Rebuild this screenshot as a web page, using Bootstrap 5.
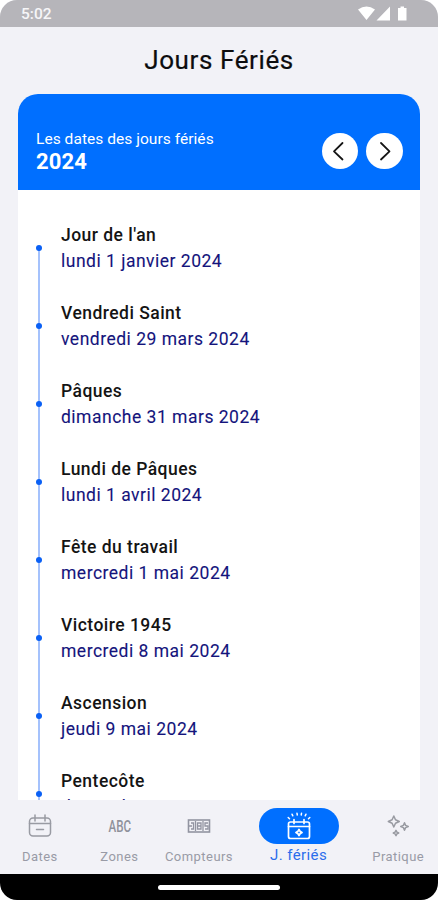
<!DOCTYPE html>
<html lang="fr">
<head>
<meta charset="utf-8">
<meta name="viewport" content="width=device-width, initial-scale=1">
<title>Jours Fériés</title>
<link href="https://cdn.jsdelivr.net/npm/bootstrap@5.3.0/dist/css/bootstrap.min.css" rel="stylesheet">
<style>
body{font-family:Roboto,"Liberation Sans",sans-serif;background:#fff}
.phone{width:438px;height:900px;background:#f2f2f7;border-radius:17px 17px 0 0}
.status{height:27px;background:#b6b5ba;color:#f6f6f8;font-size:15.5px;font-weight:500;line-height:27px;padding:1px 30px 0 21px}
.page-title{height:67px;font-size:26px;line-height:67px;letter-spacing:.6px;color:#0c0c0e;font-weight:400;-webkit-text-stroke:.2px #0c0c0e}
.holidays{margin:0 18px;border-radius:20px 20px 0 0;height:706px}
.holidays-head{height:96px;background:#006fff;padding:19px 17.500px 1px 18px}
.head-sub{font-size:15.5px;line-height:21px;letter-spacing:.05px}
.head-year{font-size:22px;line-height:24px;letter-spacing:.1px}
.round-btn{width:36.500px;height:36.500px;padding:0}
.timeline{padding:19px 0 0 43px;margin:0}
.timeline li{position:relative;height:78px;padding-top:13px;line-height:26px;font-size:17.5px;white-space:nowrap}
.timeline li::before{content:"";position:absolute;left:-22.6px;top:39px;width:2px;height:78px;background:#a5c2fc}
.timeline li::after{content:"";position:absolute;left:-24.6px;top:36px;width:6px;height:6px;border-radius:50%;background:#0a60f5}
.day-name{color:#141414;font-weight:500;letter-spacing:.47px}
.day-date{color:#14147c;letter-spacing:.5px;-webkit-text-stroke:.1px #14147c}
.tabs{height:74px;background:#f2f2f7}
.tab{width:79.6px;color:#999ba6;font-size:13px;letter-spacing:.45px;line-height:16px}
.tab .pic{height:36px;width:80px}
.tabs .active{width:120px;color:#2b6dec;font-size:15px;letter-spacing:.4px}
.tabs .active .pic{background:#006fff;border-radius:18px}
.tab .label{margin-top:5px}
.tabs .active .label{margin-top:3px}
.system{height:26px;background:#000;border-radius:0 0 17px 17px}
.handle{width:122px;height:5px;border-radius:3px;background:#fff}
.bottom{background:#fff}
</style>
<script src="https://cdn.jsdelivr.net/npm/bootstrap@5.3.0/dist/js/bootstrap.bundle.min.js"></script>
</head>
<body>
<div class="phone overflow-hidden d-flex flex-column">
  <div class="status d-flex justify-content-between">
    <span>5:02</span>
    <svg width="50" height="16" viewBox="0 0 50 16" fill="#fff" class="mt-1"><path d="M0 4.500Q8.500-1.500 17 4.500L8.500 15zM32 1.500V15.500H18.500zM40 3h2.500V1.500h3.500V3h2.500v12.500H40z"/></svg>
  </div>
  <h1 class="page-title m-0 text-center">Jours Fériés</h1>
  <section class="holidays bg-white overflow-hidden">
    <header class="holidays-head text-white d-flex align-items-center justify-content-between">
      <div class="align-self-start pt-3 lh-1">
        <div class="head-sub">Les dates des jours fériés</div>
        <div class="head-year fw-bold">2024</div>
      </div>
      <div class="d-flex gap-2">
        <button class="btn btn-light bg-white border-0 rounded-circle round-btn d-flex align-items-center justify-content-center" aria-label="Précédent"><svg width="20" height="20" fill="none" stroke="#151515" stroke-width="1.800" stroke-linecap="round" stroke-linejoin="round"><path d="M12.500 2L4 10.300l8.500 8.200"/></svg></button>
        <button class="btn btn-light bg-white border-0 rounded-circle round-btn d-flex align-items-center justify-content-center" aria-label="Suivant"><svg width="20" height="20" fill="none" stroke="#151515" stroke-width="1.800" stroke-linecap="round" stroke-linejoin="round"><path d="M7 2l8.500 8.300L7 18.500"/></svg></button>
      </div>
    </header>
    <ul class="timeline list-unstyled">
      <li><div class="day-name">Jour de l'an</div><div class="day-date">lundi 1 janvier 2024</div></li>
      <li><div class="day-name">Vendredi Saint</div><div class="day-date">vendredi 29 mars 2024</div></li>
      <li><div class="day-name">Pâques</div><div class="day-date">dimanche 31 mars 2024</div></li>
      <li><div class="day-name">Lundi de Pâques</div><div class="day-date">lundi 1 avril 2024</div></li>
      <li><div class="day-name">Fête du travail</div><div class="day-date">mercredi 1 mai 2024</div></li>
      <li><div class="day-name">Victoire 1945</div><div class="day-date">mercredi 8 mai 2024</div></li>
      <li><div class="day-name">Ascension</div><div class="day-date">jeudi 9 mai 2024</div></li>
      <li><div class="day-name">Pentecôte</div><div class="day-date">dimanche 19 mai 2024</div></li>
    </ul>
  </section>
  <nav class="tabs d-flex pt-2">
    <div class="tab d-flex flex-column align-items-center">
      <div class="pic d-flex align-items-center justify-content-center"><svg width="24" height="24" fill="none" stroke="#999ba3" stroke-width="1.500"><rect x="1.500" y="4" width="21" height="18" rx="3.500"/><path d="M1.500 9.500h21M7 1v6M17 1v6M8.500 15.500h7" stroke-linecap="round"/></svg></div>
      <div class="label">Dates</div>
    </div>
    <div class="tab d-flex flex-column align-items-center">
      <div class="pic d-flex align-items-center justify-content-center"><svg width="28" height="22" viewBox="0 0 28 22"><text x="3.500" y="17" textLength="22.500" lengthAdjust="spacingAndGlyphs" font-family="Roboto" font-size="17" font-weight="500" fill="#8f919b" letter-spacing="0">ABC</text></svg></div>
      <div class="label">Zones</div>
    </div>
    <div class="tab d-flex flex-column align-items-center">
      <div class="pic d-flex align-items-center justify-content-center"><svg width="24" height="14" fill="none" stroke="#9294a1" stroke-width="1.300"><rect x="1.500" y="1" width="21" height="12" stroke-width="1.600"/><path d="M2 7h3M4 4h2.500v6H4M8.500 2v10M10.500 4h3.500v6h-3.500zM10.500 7H14M16 2v10M21 4h-3v3h3v3h-3"/></svg></div>
      <div class="label">Compteurs</div>
    </div>
    <div class="tab active d-flex flex-column align-items-center">
      <div class="pic d-flex align-items-center justify-content-center"><svg width="28" height="30" viewBox="0 0 28 30" fill="none" stroke="#fff" stroke-width="1.700" stroke-linecap="round"><rect x="3.500" y="11" width="21" height="16.500" rx="2"/><path d="M3.500 15.500h21M9 8.500v4M19 8.500v4"/><path stroke-width="1.500" d="M3.200 6.500l1.300 1.200M7 3.200l.8 1.600M12 2.300l.3 1.700M16.500 2.300l-.3 1.700M21 3.200l-.8 1.600M24.800 6.500l-1.300 1.200"/><path stroke-width="1.800" stroke-linejoin="round" d="M14 18.500l1.100 1.900 1.900 1.100-1.900 1.100L14 24.500l-1.100-1.900-1.900-1.100 1.900-1.100z"/></svg></div>
      <div class="label">J. fériés</div>
    </div>
    <div class="tab d-flex flex-column align-items-center">
      <div class="pic d-flex align-items-center justify-content-center"><svg width="24" height="24" fill="none" stroke="#999ba2" stroke-width="1.500" stroke-linejoin="round"><path d="M7.800 2l1.700 3.800 3.800 1.700-3.800 1.700-1.700 3.800-1.700-3.800L2.300 7.500l3.800-1.700zM18.500 8.700l1.100 2.700 2.700 1.100-2.700 1.100-1.100 2.700-1.100-2.700-2.700-1.100 2.700-1.100zM10 16.300l.9 1.800 1.800.9-1.800.9-.9 1.800-.9-1.800-1.800-.9 1.800-.9z"/></svg></div>
      <div class="label">Pratique</div>
    </div>
  </nav>
  <div class="bottom"><div class="system d-flex align-items-center justify-content-center"><div class="handle"></div></div></div>
</div>
</body>
</html>
